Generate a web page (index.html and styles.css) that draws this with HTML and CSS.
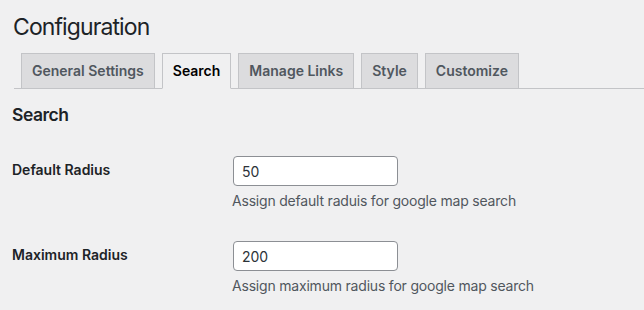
FILE: index.html
```html
<!DOCTYPE html>
<html lang="en">
<head>
    <meta charset="UTF-8">
    <meta name="viewport" content="width=device-width, initial-scale=1.0">
    <title>Configuration</title>
    <link rel="stylesheet" href="styles.css">
</head>
<body>
    <div class="wrap">
        <h1>Configuration</h1>

        <!-- Onglets de navigation -->
        <nav class="nav-tab-wrapper">
            <a href="#" class="nav-tab">General Settings</a>
            <a href="#" class="nav-tab nav-tab-active">Search</a>
            <a href="#" class="nav-tab">Manage Links</a>
            <a href="#" class="nav-tab">Style</a>
            <a href="#" class="nav-tab">Customize</a>
        </nav>

        <h2>Search</h2>

        <div class="form-table">
            <div class="form-row">
                <label class="form-label" for="defaultRadius">Default Radius</label>
                <div class="form-field">
                    <input type="text" id="defaultRadius" value="50">
                    <p class="description">Assign default raduis for google map search</p>
                </div>
            </div>
            <div class="form-row">
                <label class="form-label" for="maxRadius">Maximum Radius</label>
                <div class="form-field">
                    <input type="text" id="maxRadius" value="200">
                    <p class="description">Assign maximum radius for google map search</p>
                </div>
            </div>
        </div>
    </div>
</body>
</html>
```

FILE: styles.css
```css
body {
    font-family: Inter, "Noto Sans", sans-serif;
    margin: 0;
    background-color: #f0f0f1;
    color: #1d2327;
    font-size: 14px;
    overflow: hidden;
}

.wrap {
    padding: 12px 0 0 12px;
}

h1 {
    font-size: 23px;
    font-weight: 400;
    line-height: 30px;
    letter-spacing: -0.9px;
    margin: 0 0 11px 1px;
}

.nav-tab-wrapper {
    display: flex;
    margin-left: 2px;
    border-bottom: 1px solid #c3c4c7;
}

.nav-tab {
    display: block;
    margin-left: 7px;
    margin-bottom: -1px;
    padding: 5px 10px;
    font-size: 14px;
    line-height: 24px;
    font-weight: 600;
    color: #50575e;
    text-decoration: none;
    background-color: #dcdcde;
    border: 1px solid #c3c4c7;
}

.nav-tab-active {
    background-color: #f0f0f1;
    border-bottom-color: #f0f0f1;
    color: #000;
}

h2 {
    font-size: 17.5px;
    font-weight: 600;
    line-height: 24px;
    letter-spacing: -0.5px;
    margin: 14px 0 14px;
}

.form-row {
    display: flex;
}

.form-label {
    width: 220px;
    flex-shrink: 0;
    padding-top: 20px;
    line-height: 18px;
    font-weight: 600;
}

.form-field {
    padding: 15px 0;
}

.form-field input[type="text"] {
    display: block;
    box-sizing: border-box;
    width: 165px;
    height: 30px;
    padding: 0 8px;
    margin-left: 1px;
    font-family: inherit;
    font-size: 14px;
    color: #2c3338;
    background-color: #fff;
    border: 1px solid #8c8f94;
    border-radius: 4px;
}

.description {
    margin: 4px 0 0;
    line-height: 21px;
    letter-spacing: -0.2px;
    color: #50575e;
}
```
